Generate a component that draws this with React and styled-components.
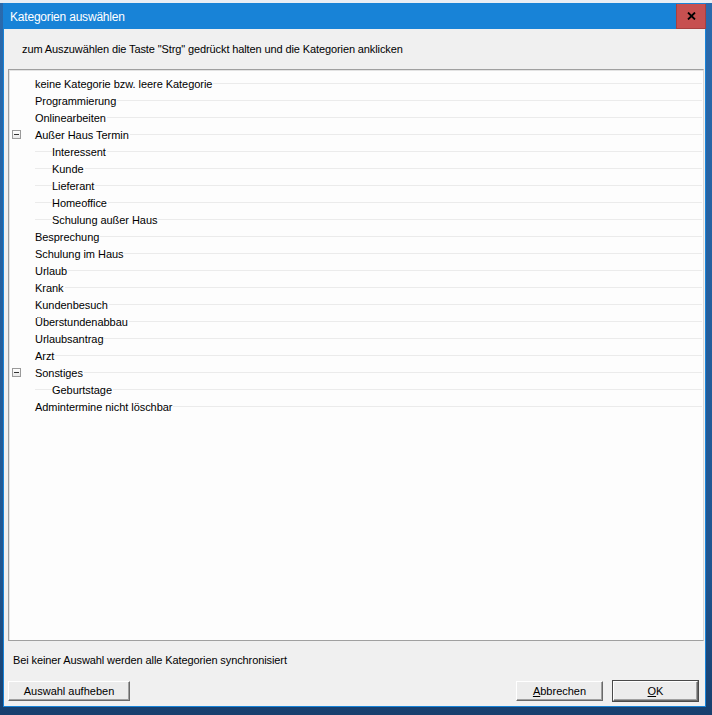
import React from "react";
import styled, { createGlobalStyle } from "styled-components";

const Global = createGlobalStyle`
  html, body { margin: 0; padding: 0; }
  body {
    width: 712px;
    height: 715px;
    overflow: hidden;
    background: linear-gradient(to bottom, #e9eef4 0, #e9eef4 3px, #2a6aad 3px, #1f5590 80%, #173f6e 100%);
    font-family: "Liberation Sans", Arial, sans-serif;
    font-size: 11px;
    color: #000;
  }
`;

const Window = styled.div`
  margin: 3px 0 0 3px;
  width: 703px;
  height: 704px;
  box-sizing: border-box;
  border: 1px solid #1883d7;
  background: #f0f0f0;
  display: flex;
  flex-direction: column;
`;

const TitleBar = styled.div`
  height: 25px;
  flex: none;
  background: #1883d7;
  display: flex;
  align-items: center;
  justify-content: space-between;
  padding-left: 6px;
`;

const Title = styled.span`
  color: #fff;
  font-size: 12px;
  letter-spacing: -0.2px;
  font-family: "Liberation Sans", Arial, sans-serif;
`;

const CloseButton = styled.div`
  width: 30px;
  height: 25px;
  box-sizing: border-box;
  background: #c75050;
  border: 1px solid #a84040;
  border-top: none;
  display: flex;
  align-items: center;
  justify-content: center;
  margin-right: -1px;
`;

const Header = styled.div`
  height: 40px;
  flex: none;
  display: flex;
  align-items: center;
  padding-left: 18px;
  letter-spacing: -0.11px;
`;

const Panel = styled.div`
  flex: 1;
  margin: 0 1px 0 4px;
  background: #fdfdfd;
  border-top: 1px solid #a0a0a0;
  border-left: 1px solid #a0a0a0;
  border-bottom: 1px solid #a0a0a0;
  border-right: 1px solid #d8d8d8;
  box-shadow: inset 1px 1px 0 #e3e3e3;
  padding-top: 5px;
  display: flex;
  flex-direction: column;
`;

const Row = styled.div`
  height: 17px;
  position: relative;
  display: flex;
  align-items: center;
  padding-left: ${(p) => (p.$level === 1 ? 43 : 26)}px;
  &::before {
    content: "";
    position: absolute;
    left: 26px;
    right: 1px;
    top: 8px;
    height: 1px;
    background: #ebebeb;
  }
`;

const Label = styled.span`
  position: relative;
  background: #fdfdfd;
  line-height: 14px;
  padding-right: 1px;
  white-space: nowrap;
  letter-spacing: -0.05px;
`;

const Expander = styled.div`
  position: absolute;
  left: 3px;
  top: 4px;
  width: 9px;
  height: 9px;
  box-sizing: border-box;
  border: 1px solid #9a9a9a;
  background: linear-gradient(#ffffff, #e8e8e8);
  &::after {
    content: "";
    position: absolute;
    left: 1px;
    right: 1px;
    top: 3px;
    height: 1px;
    background: #333;
  }
`;

const Footer = styled.div`
  flex: none;
  height: 65px;
  display: flex;
  flex-direction: column;
  padding: 12px 7px 5px 4px;
  box-sizing: border-box;
`;

const Note = styled.div`
  padding-left: 5px;
  height: 14px;
  line-height: 14px;
  letter-spacing: -0.1px;
`;

const Buttons = styled.div`
  margin-top: auto;
  display: flex;
  align-items: center;
`;

const Button = styled.div`
  width: ${(p) => p.$w}px;
  height: 20px;
  box-sizing: border-box;
  display: flex;
  align-items: center;
  justify-content: center;
  background: #ececec;
  border-top: 1px solid #ffffff;
  border-left: 1px solid #ffffff;
  border-right: 1px solid #696969;
  border-bottom: 1px solid #696969;
  box-shadow: inset -1px -1px 0 #a0a0a0;
  margin-left: ${(p) => p.$ml || 0}px;
  ${(p) =>
    p.$default &&
    `
    outline: 1px solid #4a4a4a;
    outline-offset: 0;
  `}
`;

const Spacer = styled.div`
  flex: 1;
`;

const items = [
  { t: "keine Kategorie bzw. leere Kategorie" },
  { t: "Programmierung" },
  { t: "Onlinearbeiten" },
  { t: "Außer Haus Termin", exp: true },
  { t: "Interessent", l: 1 },
  { t: "Kunde", l: 1 },
  { t: "Lieferant", l: 1 },
  { t: "Homeoffice", l: 1 },
  { t: "Schulung außer Haus", l: 1 },
  { t: "Besprechung" },
  { t: "Schulung im Haus" },
  { t: "Urlaub" },
  { t: "Krank" },
  { t: "Kundenbesuch" },
  { t: "Überstundenabbau" },
  { t: "Urlaubsantrag" },
  { t: "Arzt" },
  { t: "Sonstiges", exp: true },
  { t: "Geburtstage", l: 1 },
  { t: "Admintermine nicht löschbar" },
];

export default function App() {
  return (
    <>
      <Global />
      <Window>
        <TitleBar>
          <Title>Kategorien auswählen</Title>
          <CloseButton>
            <svg width="9" height="8" viewBox="0 0 9 8">
              <path d="M1 0.5 L8 7.5 M8 0.5 L1 7.5" stroke="#000" strokeWidth="1.8" />
            </svg>
          </CloseButton>
        </TitleBar>
        <Header>
          zum Auszuwählen die Taste "Strg" gedrückt halten und die Kategorien anklicken
        </Header>
        <Panel>
          {items.map((it, i) => (
            <Row key={i} $level={it.l || 0}>
              {it.exp && <Expander />}
              <Label>{it.t}</Label>
            </Row>
          ))}
        </Panel>
        <Footer>
          <Note>Bei keiner Auswahl werden alle Kategorien synchronisiert</Note>
          <Buttons>
            <Button $w={122}>Auswahl aufheben</Button>
            <Spacer />
            <Button $w={87}>
              <span><u>A</u>bbrechen</span>
            </Button>
            <Button $w={85} $ml={10} $default>
              <span><u>O</u>K</span>
            </Button>
          </Buttons>
        </Footer>
      </Window>
    </>
  );
}
